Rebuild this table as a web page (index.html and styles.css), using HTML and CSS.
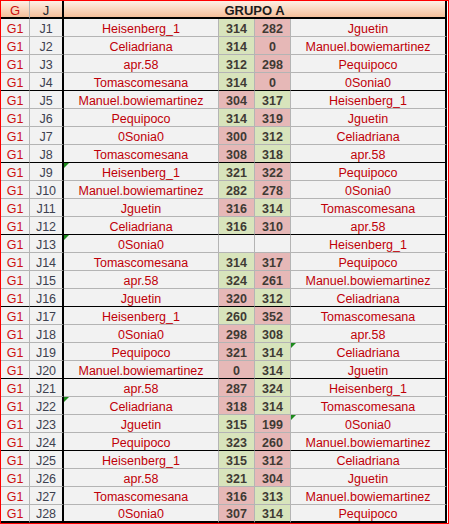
FILE: index.html
```html
<!DOCTYPE html>
<html>
<head>
<meta charset="utf-8">
<link rel="stylesheet" href="styles.css">
</head>
<body>
<div class="frame">
  <div class="sheet">
    <div class="row head">
      <div class="c c-g hg">G</div>
      <div class="c c-j hj">J</div>
      <div class="c c-span">GRUPO A</div>
    </div>

    <div class="row"><div class="c c-g">G1</div><div class="c c-j">J1</div><div class="c c-n1">Heisenberg_1</div><div class="c c-s w">314</div><div class="c c-s l">282</div><div class="c c-n2">Jguetin</div></div>
    <div class="row"><div class="c c-g">G1</div><div class="c c-j">J2</div><div class="c c-n1">Celiadriana</div><div class="c c-s w">314</div><div class="c c-s l">0</div><div class="c c-n2">Manuel.bowiemartinez</div></div>
    <div class="row"><div class="c c-g">G1</div><div class="c c-j">J3</div><div class="c c-n1">apr.58</div><div class="c c-s w">312</div><div class="c c-s l">298</div><div class="c c-n2">Pequipoco</div></div>
    <div class="row sep"><div class="c c-g">G1</div><div class="c c-j">J4</div><div class="c c-n1">Tomascomesana</div><div class="c c-s w">314</div><div class="c c-s l">0</div><div class="c c-n2">0Sonia0</div></div>

    <div class="row"><div class="c c-g">G1</div><div class="c c-j">J5</div><div class="c c-n1">Manuel.bowiemartinez</div><div class="c c-s l">304</div><div class="c c-s w">317</div><div class="c c-n2">Heisenberg_1</div></div>
    <div class="row"><div class="c c-g">G1</div><div class="c c-j">J6</div><div class="c c-n1">Pequipoco</div><div class="c c-s w">314</div><div class="c c-s l">319</div><div class="c c-n2">Jguetin</div></div>
    <div class="row"><div class="c c-g">G1</div><div class="c c-j">J7</div><div class="c c-n1">0Sonia0</div><div class="c c-s l">300</div><div class="c c-s w">312</div><div class="c c-n2">Celiadriana</div></div>
    <div class="row sep"><div class="c c-g">G1</div><div class="c c-j">J8</div><div class="c c-n1">Tomascomesana</div><div class="c c-s l">308</div><div class="c c-s w">318</div><div class="c c-n2">apr.58</div></div>

    <div class="row"><div class="c c-g">G1</div><div class="c c-j">J9</div><div class="c c-n1 tri">Heisenberg_1</div><div class="c c-s w">321</div><div class="c c-s l">322</div><div class="c c-n2">Pequipoco</div></div>
    <div class="row"><div class="c c-g">G1</div><div class="c c-j">J10</div><div class="c c-n1">Manuel.bowiemartinez</div><div class="c c-s w">282</div><div class="c c-s l">278</div><div class="c c-n2">0Sonia0</div></div>
    <div class="row"><div class="c c-g">G1</div><div class="c c-j">J11</div><div class="c c-n1">Jguetin</div><div class="c c-s l">316</div><div class="c c-s w">314</div><div class="c c-n2">Tomascomesana</div></div>
    <div class="row sep"><div class="c c-g">G1</div><div class="c c-j">J12</div><div class="c c-n1">Celiadriana</div><div class="c c-s w">316</div><div class="c c-s l">310</div><div class="c c-n2">apr.58</div></div>

    <div class="row"><div class="c c-g">G1</div><div class="c c-j">J13</div><div class="c c-n1 tri">0Sonia0</div><div class="c c-s"></div><div class="c c-s"></div><div class="c c-n2">Heisenberg_1</div></div>
    <div class="row"><div class="c c-g">G1</div><div class="c c-j">J14</div><div class="c c-n1">Tomascomesana</div><div class="c c-s w">314</div><div class="c c-s l">317</div><div class="c c-n2">Pequipoco</div></div>
    <div class="row"><div class="c c-g">G1</div><div class="c c-j">J15</div><div class="c c-n1">apr.58</div><div class="c c-s w">324</div><div class="c c-s l">261</div><div class="c c-n2">Manuel.bowiemartinez</div></div>
    <div class="row sep"><div class="c c-g">G1</div><div class="c c-j">J16</div><div class="c c-n1">Jguetin</div><div class="c c-s l">320</div><div class="c c-s w">312</div><div class="c c-n2">Celiadriana</div></div>

    <div class="row"><div class="c c-g">G1</div><div class="c c-j">J17</div><div class="c c-n1">Heisenberg_1</div><div class="c c-s w">260</div><div class="c c-s l">352</div><div class="c c-n2">Tomascomesana</div></div>
    <div class="row"><div class="c c-g">G1</div><div class="c c-j">J18</div><div class="c c-n1">0Sonia0</div><div class="c c-s l">298</div><div class="c c-s w">308</div><div class="c c-n2">apr.58</div></div>
    <div class="row"><div class="c c-g">G1</div><div class="c c-j">J19</div><div class="c c-n1">Pequipoco</div><div class="c c-s l">321</div><div class="c c-s w">314</div><div class="c c-n2 tri">Celiadriana</div></div>
    <div class="row sep"><div class="c c-g">G1</div><div class="c c-j">J20</div><div class="c c-n1">Manuel.bowiemartinez</div><div class="c c-s l">0</div><div class="c c-s w">314</div><div class="c c-n2">Jguetin</div></div>

    <div class="row"><div class="c c-g">G1</div><div class="c c-j">J21</div><div class="c c-n1">apr.58</div><div class="c c-s l">287</div><div class="c c-s w">324</div><div class="c c-n2">Heisenberg_1</div></div>
    <div class="row"><div class="c c-g">G1</div><div class="c c-j">J22</div><div class="c c-n1 tri">Celiadriana</div><div class="c c-s l">318</div><div class="c c-s w">314</div><div class="c c-n2">Tomascomesana</div></div>
    <div class="row"><div class="c c-g">G1</div><div class="c c-j">J23</div><div class="c c-n1">Jguetin</div><div class="c c-s w">315</div><div class="c c-s l">199</div><div class="c c-n2 tri">0Sonia0</div></div>
    <div class="row sep"><div class="c c-g">G1</div><div class="c c-j">J24</div><div class="c c-n1">Pequipoco</div><div class="c c-s w">323</div><div class="c c-s l">260</div><div class="c c-n2">Manuel.bowiemartinez</div></div>

    <div class="row"><div class="c c-g">G1</div><div class="c c-j">J25</div><div class="c c-n1">Heisenberg_1</div><div class="c c-s w">315</div><div class="c c-s l">312</div><div class="c c-n2">Celiadriana</div></div>
    <div class="row"><div class="c c-g">G1</div><div class="c c-j">J26</div><div class="c c-n1">apr.58</div><div class="c c-s w">321</div><div class="c c-s l">304</div><div class="c c-n2">Jguetin</div></div>
    <div class="row"><div class="c c-g">G1</div><div class="c c-j">J27</div><div class="c c-n1">Tomascomesana</div><div class="c c-s l">316</div><div class="c c-s w">313</div><div class="c c-n2">Manuel.bowiemartinez</div></div>
    <div class="row last"><div class="c c-g">G1</div><div class="c c-j">J28</div><div class="c c-n1">0Sonia0</div><div class="c c-s l">307</div><div class="c c-s w">314</div><div class="c c-n2">Pequipoco</div></div>
  </div>
</div>
</body>
</html>
```

FILE: styles.css
```css
html, body {
  margin: 0;
  padding: 0;
  background: #ffffff;
}

.frame {
  width: 447px;
  height: 522px;
  border: 1px solid #ff0000;
  background: #ffffff;
}

.sheet {
  width: 446px;
  display: flex;
  flex-direction: column;
  font-family: "Liberation Sans", Arial, sans-serif;
  font-size: 12.5px;
}

.row {
  display: flex;
  height: 18px;
}

.c {
  box-sizing: border-box;
  height: 18px;
  display: flex;
  align-items: flex-end;
  justify-content: center;
  line-height: 13px;
  white-space: nowrap;
  background: #f2f2f2;
  border-bottom: 1px solid #b4b4b4;
  border-right: 1px solid #b4b4b4;
  color: #c00008;
  position: relative;
}

.c-g { width: 29px; color: #cc1010; }
.c-j { width: 34px; color: #3d4150; border-right: 2px solid #000; }
.c-n1 { width: 155px; }
.c-s { width: 36px; color: #3f3a34; font-weight: bold; }
.c-n2 { width: 156px; border-right: 2px solid #000; }

.w { background: #d8e4bc; }
.l { background: #e6b8b7; }

.sep .c { border-bottom-color: #000; }
.last .c { border-bottom: 2px solid #000; }

.head .c {
  border-bottom: 2px solid #000;
  background: linear-gradient(#fdf0e6, #f5bf9a);
}
.head .hg { color: #cc1010; font-size: 13px; }
.head .hj { color: #22262e; font-size: 13px; }
.head .c-span {
  width: 383px;
  border-right: 2px solid #000;
  font-weight: bold;
  font-size: 13px;
  color: #1c1c1c;
}

.tri::before {
  content: "";
  position: absolute;
  left: 0;
  top: 0;
  border-top: 5px solid #1d8a1d;
  border-right: 5px solid transparent;
}
```
